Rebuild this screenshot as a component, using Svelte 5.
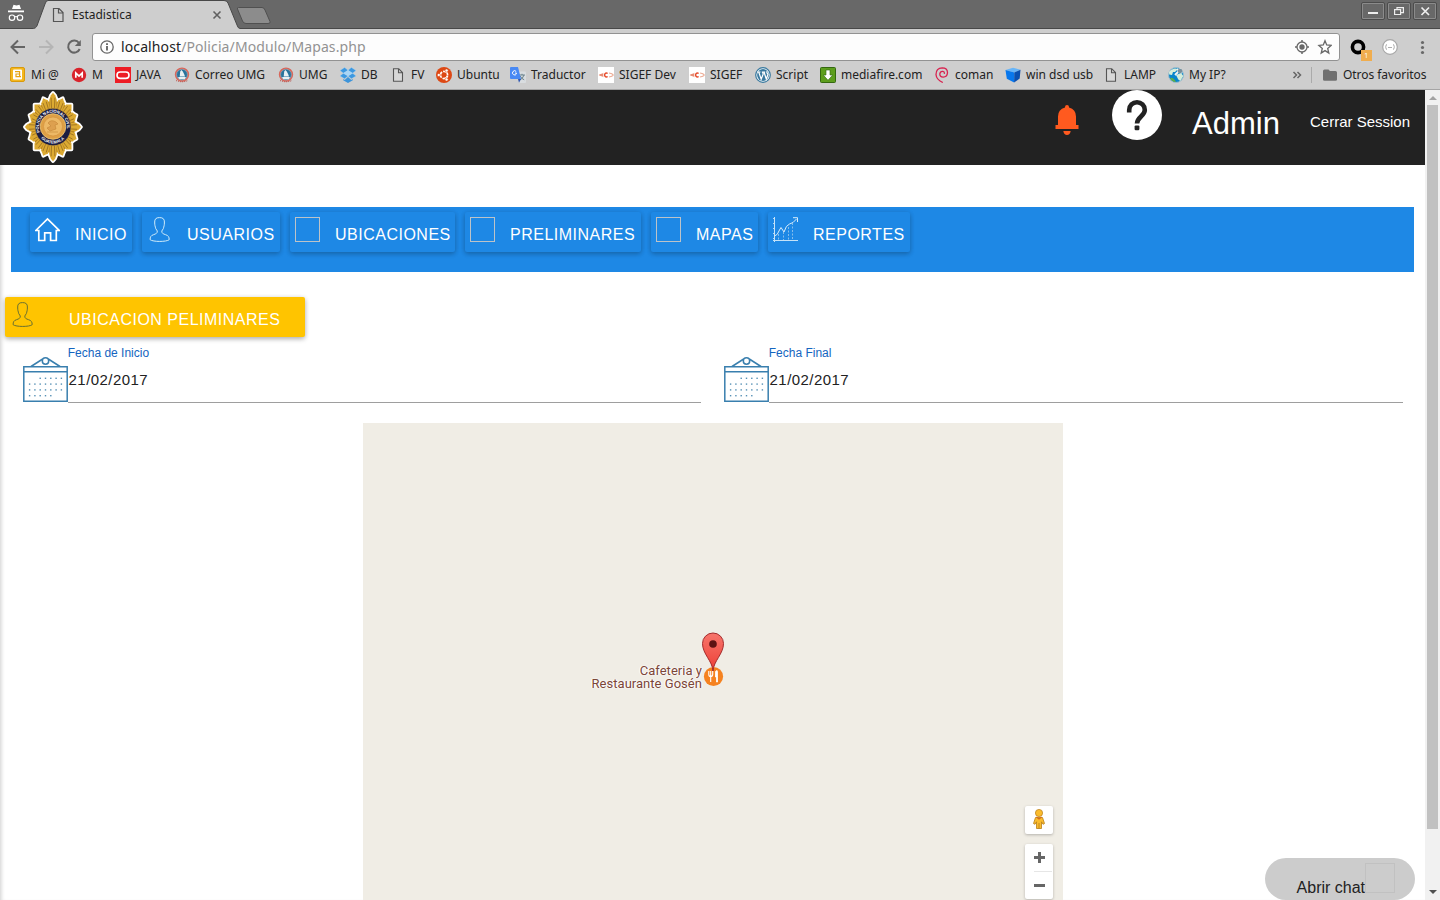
<script>
  const bookmarks = [
    { icon: 'mail', label: 'Mi @', w: 61 },
    { icon: 'mega', label: 'M', w: 44 },
    { icon: 'java', label: 'JAVA', w: 59 },
    { icon: 'umg', label: 'Correo UMG', w: 104 },
    { icon: 'umg', label: 'UMG', w: 62 },
    { icon: 'dropbox', label: 'DB', w: 50 },
    { icon: 'page', label: 'FV', w: 46 },
    { icon: 'ubuntu', label: 'Ubuntu', w: 74 },
    { icon: 'translate', label: 'Traductor', w: 88 },
    { icon: 'sigef', label: 'SIGEF Dev', w: 91 },
    { icon: 'sigef', label: 'SIGEF', w: 66 },
    { icon: 'wordpress', label: 'Script', w: 65 },
    { icon: 'download', label: 'mediafire.com', w: 114 },
    { icon: 'debian', label: 'coman', w: 71 },
    { icon: 'cube', label: 'win dsd usb', w: 98 },
    { icon: 'page', label: 'LAMP', w: 65 },
    { icon: 'globe', label: 'My IP?', w: 80 }
  ];
  const menu = [
    { icon: 'home', label: 'INICIO', w: 102 },
    { icon: 'user', label: 'USUARIOS', w: 138 },
    { icon: 'box', label: 'UBICACIONES', w: 165 },
    { icon: 'box', label: 'PRELIMINARES', w: 176 },
    { icon: 'box', label: 'MAPAS', w: 107 },
    { icon: 'chart', label: 'REPORTES', w: 142 }
  ];
  const dates = [
    { label: 'Fecha de Inicio', value: '21/02/2017' },
    { label: 'Fecha Final', value: '21/02/2017' }
  ];

  // Rays of the police badge, on an ellipse
  const rays = Array.from({ length: 16 }, (_, i) => {
    const a = (i * Math.PI) / 8;
    const k = i % 4 === 0 ? 1.02 : i % 2 === 0 ? 0.95 : 0.93;
    const at = (t, r) => `${(30 + Math.sin(t) * r * 27.5).toFixed(1)},${(36 - Math.cos(t) * r * 33.5).toFixed(1)}`;
    return {
      shape: `${at(a - 0.2, 0.55)} ${at(a - 0.17, 0.82)} ${at(a - 0.08, k * 0.93)} ${at(a, k)} ${at(a + 0.08, k * 0.93)} ${at(a + 0.17, 0.82)} ${at(a + 0.2, 0.55)}`,
      lines: [-0.1, 0.1].map((d) => `M${at(a + d, 0.5)} L${at(a + d * 0.8, k * 0.86)}`).join(' ')
    };
  });
  const dots = [];
  for (let r = 0; r < 4; r++)
    for (let c = 0; c < 7; c++)
      if (!(r === 0 && c < 2) && !(r === 3 && c > 4)) dots.push([6.6 + c * 5.3, 21.3 + r * 5.8]);
</script>

{#snippet favicon(name)}
  <svg class="fav" width="16" height="16" viewBox="0 0 16 16">
    {#if name === 'page'}
      <path d="M3.5 1.7h5.2l3.8 3.8v8.8h-9zM8.5 2v3.8h4" fill="#d8d8d8" stroke="#555" stroke-width="1.1" />
    {:else if name === 'mail'}
      <rect x=".5" y=".5" width="14" height="14" rx="1.5" fill="#f4b71e" stroke="#d99a0b" />
      <rect x="3" y="2.5" width="9" height="10" rx="1" fill="#fff" />
      <path d="M5 4.600h4.600v5M9.500 7H6v2.600h5" fill="none" stroke="#e6a312" stroke-width="1.200" />
    {:else if name === 'mega'}
      <circle cx="8" cy="8" r="7.2" fill="#d9232b" />
      <path d="M4.8 10.800V6L8 9l3.200-3v4.800" fill="none" stroke="#fff" stroke-width="1.700" />
    {:else if name === 'java'}
      <rect width="16" height="16" fill="#ed1c24" />
      <rect x="2" y="5" width="12" height="6.4" rx="3.2" fill="none" stroke="#fff" stroke-width="1.6" />
    {:else if name === 'umg'}
      <circle cx="8" cy="7.6" r="6.4" fill="#28739c" stroke="#d9675b" stroke-width="1.6" />
      <circle cx="8" cy="7.6" r="5.4" fill="none" stroke="#b9c3c8" stroke-width=".5" />
      <path d="M6.200 4.600 7.300 3l1.500 1.600 1.500 3 .7 2H5.700zM4 10h8l-1.200 2.200H5.200z" fill="#e8f0f3" />
      <path d="M2 13.5q6 2.5 12 0" fill="none" stroke="#b5463d" stroke-dasharray="1 1" />
    {:else if name === 'dropbox'}
      <path d="m0 3.5 4.6-3L8 3.3 3.4 6.2zM16 3.5l-4.6-3L8 3.3l4.6 2.9zM0 9l3.4-2.8L8 9l-3.4 2.8zM16 9l-3.4-2.8L8 9l3.4 2.8z" fill="#3d98e0" stroke="#a9d6f6" stroke-width=".4" />
      <path d="m3.2 12 1.5 1L8 10l3.3 3 1.5-1v1.2L8 16l-4.8-2.8z" fill="#3c94da" />
      <path d="M3.4 6.2 8 3.3l4.6 2.9L8 9z" fill="#a8d5f6" />
    {:else if name === 'ubuntu'}
      <circle cx="8" cy="8" r="8" fill="#dd4814" />
      <circle cx="8" cy="8" r="3.6" fill="none" stroke="#fff" stroke-width="1.7" stroke-dasharray="6.5 1.04" stroke-dashoffset="-.5" />
      <g fill="#fff" stroke="#dd4814" stroke-width=".6"><circle cx="2.8" cy="8" r="1.6" /><circle cx="10.6" cy="3.5" r="1.6" /><circle cx="10.6" cy="12.5" r="1.6" /></g>
    {:else if name === 'translate'}
      <path d="M7 4.5h8q1 0 1 1V15q0 1-1 1H9.5z" fill="#d9dde0" />
      <path d="M9.3 8h5.600M12 6.8V8m2 0q-1.200 3.600-4 5m.2-4q1.500 3 4 3.800" fill="none" stroke="#69818a" />
      <path d="M1 0h7l3 12H1q-1 0-1-1V1q0-1 1-1z" fill="#4889f4" />
      <path d="m8 12 3 0-2 3.800z" fill="#2f56b1" />
      <path d="M6.200 4.500A2.100 2.100 0 1 0 6.500 6.800V6.100H5" fill="none" stroke="#fff" stroke-width="1" />
    {:else if name === 'sigef'}
      <rect width="16" height="16" fill="#fff" />
      <path d="m5.500 5.800-5 2.200 5 2.200q-.8-2.200 0-4.400" fill="#f0a690" />
      <path d="M1.500 8h3.500" stroke="#dd6548" stroke-width=".8" />
      <path d="M9.600 6.500A1.900 1.900 0 1 0 9.600 9.500" fill="none" stroke="#e64c2c" stroke-width="1.500" />
      <path d="M11 6q3.500.5 4.300 2-.8 1.500-4.300 2" fill="none" stroke="#edae98" stroke-width="1.200" />
    {:else if name === 'wordpress'}
      <circle cx="8" cy="8" r="7.3" fill="#f5f9fb" stroke="#39799f" stroke-width="1.200" />
      <circle cx="8" cy="8" r="5.9" fill="#39799f" />
      <path d="M2.300 5h3.200M6.800 5h3.400M3.700 5l2.500 7.200L8.200 7 7.500 5M9 5l2.300 7 1.700-4.900q-1.800-1.600-.7-3" fill="none" stroke="#fff" stroke-width="1.200" />
    {:else if name === 'download'}
      <rect x=".5" y=".5" width="15" height="15" rx="1" fill="#5d9e1d" stroke="#346810" />
      <path d="M6 3h4v5h2.700L8 13.300 3.300 8H6z" fill="#fff" stroke="#2f6410" stroke-width=".6" />
    {:else if name === 'debian'}
      <path d="M8.800 15.500Q2.300 12.500 2 7.500 2 1.200 8.200.900q5.200 0 5.300 4.800-.3 4.200-4.300 4.400-3.500-.3-3.400-3.300.4-2.600 3-2.400 2 .5 1.500 2.500" fill="none" stroke="#d8224f" stroke-width="1.300" />
    {:else if name === 'cube'}
      <path d="m.5 3 7.500-2.300 7.500 2L9.300 5.400z" fill="#68b5f8" />
      <path d="m.5 3 8.800 2.400-.2 10.200L1.800 11.800z" fill="#0877ed" />
      <path d="m9.300 5.400 6.200-2.700-.8 8.800-5.600 4.100z" fill="#0a4fb0" />
    {:else if name === 'globe'}
      <circle cx="8" cy="8" r="7.5" fill="#0786cb" stroke="#9ebccb" />
      <path d="M1 5q4-5 9-3L7 5 5 5 4 8 1.200 7.500zM8 8l5-2 2.300 3-3 5-2-1.500z" fill="#d5edda" />
      <path d="M2 11q3-1 6 4-4 0-6-4" fill="#61af45" />
      <path d="m7 8 6-6m-4 0 5 4" stroke="#eef4f5" stroke-width="2" /><circle cx="12" cy="4" r="2.300" fill="#778f9b" />
    {/if}
  </svg>
{/snippet}

{#snippet userIcon(color)}
  <svg width="25" height="25" viewBox="0 0 25 25" fill="none" stroke={color} stroke-width="1">
    <path d="M12.500.6C9 .5 7.600 2.200 7.700 5 7.600 8.500 8.300 9.500 8.700 11.500L10.300 14C10.400 16.300 9 16.800 6.500 17.700 3.800 18.500 3.100 20 3.100 22.700 6 25 19.500 25 22.200 22.700 22.200 20 21.300 18.500 18.600 17.700 16 16.800 14.700 16.300 14.800 14L16.400 11.500C16.800 9.500 17.500 8.500 17.400 5 17.500 2.200 16 .5 12.500.6z" />
  </svg>
{/snippet}

<div class="screen">
  <div class="tabs">
    <svg class="chrome" width="1440" height="29" viewBox="0 0 1440 29">
      <path d="M0 28.500H33.500C36.500 28 37 26 38 23L45 4Q46 .5 48 .5H224Q227 .5 228 3L237 25Q238 28.500 240 28.500H1440V30H0z" fill="#cecece" stroke="#484848" />
      <path d="M238.500 7.500H262Q264 7.500 265 10L270 21.500Q271 23.500 268 23.500H246Q243.500 23.500 242.500 21L237.500 9Q237 7.500 238.500 7.500z" fill="#8c8c8c" stroke="#505050" />
      <path d="m12 9 1.500-4.300 3 .7 3-.7L21 9zM8 10.500h16v1.700H8z" fill="#fff" />
      <g fill="none" stroke="#fff" stroke-width="1.200"><circle cx="12" cy="17.700" r="2.700" /><circle cx="20" cy="17.700" r="2.700" /><path d="M14.500 17q1.500-1 3 0" /></g>
      <path d="M53.500 8.500h5.500l4 4v9h-9.500zM58.500 8.500v4.500H63" fill="none" stroke="#555" stroke-width="1.200" />
      <path d="m213.500 11.500 7 7m0-7-7 7" stroke="#606060" stroke-width="1.600" />
      <g fill="none" stroke="#4c4c4c"><rect x="1361.500" y="2.500" width="23" height="17" rx="1.500" /><rect x="1387.500" y="2.500" width="23" height="17" rx="1.500" /><rect x="1413.500" y="2.500" width="23" height="17" rx="1.500" /></g>
      <g fill="none" stroke="#8b8b8b"><rect x="1362.500" y="3.500" width="21" height="15" rx=".5" /><rect x="1388.500" y="3.500" width="21" height="15" rx=".5" /><rect x="1414.500" y="3.500" width="21" height="15" rx=".5" /></g>
      <path d="M1368 13h10" stroke="#eee" stroke-width="2" />
      <g fill="#686868" stroke="#eee" stroke-width="1.200"><path d="M1397 7.600h6.400v5h-6.400z" /><path d="M1394.600 9.700h6v4.800h-6z" /></g>
      <path d="m1421.500 7.500 7.500 7.500m0-7.500-7.500 7.500" stroke="#eee" stroke-width="1.700" />
    </svg>
    <span class="tabtitle">Estadistica</span>
  </div>

  <div class="toolbar">
    <svg class="navicons" width="92" height="34" viewBox="0 29 92 34" fill="none">
      <path d="M25 47H12M18 40.500 11.500 47l6.500 6.500" stroke="#656565" stroke-width="2" />
      <path d="M39 47h13M46 40.500l6.500 6.500-6.500 6.500" stroke="#b5b5b5" stroke-width="2" />
      <path d="M79 43A6 6 0 1 0 79.700 49" stroke="#656565" stroke-width="2" /><path d="M80.800 40v6h-6z" fill="#656565" />
    </svg>
    <div class="address">
      <svg width="14" height="14" viewBox="0 0 14 14"><circle cx="7" cy="7" r="6.200" fill="none" stroke="#666" stroke-width="1.300" /><path d="M7 6v4.500M7 3.300V5" stroke="#555" stroke-width="1.700" /></svg>
      <span class="url">localhost<i>/Policia/Modulo/Mapas.php</i></span>
      <svg class="right" width="38" height="16" viewBox="0 0 38 16" fill="none" stroke="#686868">
        <circle cx="8" cy="8" r="5" stroke-width="1.300" /><circle cx="8" cy="8" r="2.700" fill="#686868" stroke="none" /><path d="M8 1v2M8 13v2M1 8h2M13 8h2" stroke-width="1.500" />
        <path d="m31 1.700 1.700 4.300 4.400.4-3.400 3.100 1.100 4.600-3.800-2.500-3.800 2.500 1.100-4.600-3.400-3.100 4.400-.4z" stroke-width="1.300" />
      </svg>
    </div>
    <svg width="100" height="34" viewBox="1340 29 100 34">
      <circle cx="1358" cy="47" r="5.600" fill="none" stroke="#000" stroke-width="3.600" />
      <rect x="1361" y="50" width="11" height="11" fill="#f0ad4e" /><text x="1364.300" y="58.200" fill="#fff" font-family="Noto Sans" font-size="7">1</text>
      <circle cx="1390" cy="47" r="7.300" fill="#fff" stroke="#a8a8a8" stroke-width="1.200" />
      <path d="M1387 44.500q-1.300 0-1 1.700l-.7.800.7.800q-.3 1.700 1 1.700M1393 44.500q1.300 0 1 1.700l.7.800-.7.800q.3 1.700-1 1.700M1388 47.500h4" fill="none" stroke="#999" stroke-width=".8" />
      <g fill="#686868"><circle cx="1422.500" cy="42.500" r="1.600" /><circle cx="1422.500" cy="47.500" r="1.600" /><circle cx="1422.500" cy="52.500" r="1.600" /></g>
    </svg>
  </div>

  <div class="bookmarks">
    {#each bookmarks as b}
      <div class="bookmark" style="width:{b.w}px">{@render favicon(b.icon)}<span>{b.label}</span></div>
    {/each}
    <div class="other">
      <svg width="50" height="20" viewBox="1290 65 50 20"><path d="m1293.500 72 3 3-3 3m4-6 3 3-3 3" fill="none" stroke="#666" stroke-width="1.500" /><path d="M1311.500 67v16" stroke="#aaa" /><path d="M1323 71q0-1.500 1.500-1.500h4l1.500 1.500h5.500q1.500 0 1.500 1.500v7q0 1.300-1.500 1.300h-11q-1.500 0-1.500-1.300z" fill="#707070" /></svg>
      <span>Otros favoritos</span>
    </div>
  </div>

  <div class="viewport">
    <main>
      <header>
        <svg class="badge" width="60" height="74" viewBox="0 0 60 72">
          <g fill="#fff" stroke="#fff" stroke-width="3.600" stroke-linejoin="round">{#each rays as r}<polygon points={r.shape} />{/each}</g>
          <ellipse cx="30" cy="36" rx="22" ry="26" fill="#b07d1c" />
          <g fill="#dcaa32">{#each rays as r}<polygon points={r.shape} />{/each}</g>
          <g stroke="#8a601a" stroke-width=".7">{#each rays as r}<path d={r.lines} />{/each}</g>
          <ellipse cx="30" cy="36" rx="18" ry="18.800" fill="#1b1d42" stroke="#c99a35" stroke-width=".7" />
          <circle cx="30" cy="35.500" r="12.800" fill="#dea046" stroke="#f2cc77" stroke-width=".8" />
          <circle cx="30" cy="35.500" r="9.500" fill="#edb966" stroke="#d6943e" stroke-width=".7" />
          <path d="M25 32q3-4 8-1l2 2-3 1 1 4-6 2-3-3 4-2zM24 41h11" fill="#dda04f" stroke="#c48738" stroke-width=".6" />
          <path id="arcTop" d="M17.500 42.500A14 14.400 0 1 1 42.500 42.500" fill="none" /><path id="arcBottom" d="M15.500 43.500A16.400 17 0 0 0 44.500 43.500" fill="none" />
          <g fill="#fff" font-family="Liberation Sans" font-weight="700" font-size="4.200"><text><textPath href="#arcTop" startOffset="1.500" textLength="51" lengthAdjust="spacingAndGlyphs">POLICIA NACIONAL CIVIL</textPath></text><text><textPath href="#arcBottom" startOffset="4.500" textLength="26" lengthAdjust="spacingAndGlyphs">GUATEMALA</textPath></text></g>
        </svg>
        <svg class="bell" width="24" height="30" viewBox="0 0 24 30" fill="#ff5a1f"><path d="M10 2.500V2a2 2 0 0 1 4 0v.5q7 2 7 9V20h2.500v4H.5v-4H3v-8.500q0-7 7-9zM8.300 26h7.400q-.7 4-3.700 4t-3.700-4z" /></svg>
        <svg class="help" width="50" height="50" viewBox="0 0 50 50"><circle cx="25" cy="25" r="25" fill="#fff" /><path d="M17.200 22.500v-2.500a7.800 7.800 0 0 1 15.600 0c0 6-7.800 7-7.800 13.500" fill="none" stroke="#222" stroke-width="4.600" /><rect x="22.600" y="35.400" width="4.800" height="4.800" rx="1.200" fill="#222" /></svg>
        <span class="admin">Admin</span>
        <span class="logout">Cerrar Session</span>
      </header>

      <nav>
        {#each menu as m}
          <div class="btn" style="width:{m.w}px">
            {#if m.icon === 'user'}
              {@render userIcon('#d0ebf9')}
            {:else}
              <svg width="25" height="25" viewBox="0 0 25 25" fill="none">
                {#if m.icon === 'home'}
                  <path d="m.8 13.500 11.700-11.500L24.200 13.500H21.300V23.500h-5.700v-7.700H9.700v7.700H3.800v-10z" stroke="#fff" stroke-width="1.700" />
                {:else if m.icon === 'box'}
                  <rect x=".5" y=".5" width="24" height="24" stroke="#bdc3c8" />
                {:else}
                  <path d="M1.500 0v25M0 23.500h25" stroke="#c5e2f8" /><path d="M.5 1v24" stroke="#afd7f5" stroke-dasharray="1 4" />
                  <path d="M1.500 19q3-.5 5-6l1.500-2.500 3 4.500q2-7 5.500-8 3.500-.5 7-5M20 .700h4.500V5" stroke="#d8ecfa" />
                  <path d="M5.500 17v6m5-8v8m5-13v13m4-17v17" stroke="#85bdea" stroke-dasharray="2 1.500" />
                {/if}
              </svg>
            {/if}
            <span>{m.label}</span>
          </div>
        {/each}
      </nav>

      <div class="title">{@render userIcon('#687032')}<span>UBICACION PELIMINARES</span></div>

      <div class="dates">
        {#each dates as d}
          <div class="date">
            <svg width="45" height="46" viewBox="0 0 45 46" fill="none" stroke="#397fae" stroke-width="1.500">
              <path d="M.8 9.800h43.400v34.500H.8zM1 14.800h43M8 9.500 19.700 2M37 9.500 25.300 2" /><circle cx="22.500" cy="4" r="3.200" />
              {#each dots as [x, y]}<rect x={x - 0.7} y={y - 0.7} width="1.400" height="1.400" fill="#5590b5" stroke="none" />{/each}
            </svg>
            <div class="field"><label>{d.label}</label><span>{d.value}</span></div>
          </div>
        {/each}
      </div>

      <section class="map">
        <div class="place">Cafeteria y<br />Restaurante Gosén</div>
        <svg class="pin" width="24" height="56" viewBox="0 0 24 56">
          <circle cx="12.500" cy="44.500" r="9.600" fill="#f58220" />
          <path d="M7.800 39v3.500q0 2 1.900 2V50M11.700 39v3.500q0 2-2 2M9.700 39v5" fill="none" stroke="#fff" stroke-width="1.100" /><path d="M14.500 45v-5.500q2-2 2 0V50h-1v-5z" fill="#fff" stroke="#fff" stroke-width=".8" />
          <path d="M12 39C11.500 29 1.500 22 1.500 11.500a10.500 10.500 0 0 1 21 0C22.500 22 12.500 29 12 39z" fill="url(#pinred)" stroke="#a52b2b" />
          <circle cx="12" cy="12" r="3.800" fill="#5d1313" />
          <defs><linearGradient id="pinred" x2="0" y2="1"><stop stop-color="#f7756c" /><stop offset="1" stop-color="#ed3f35" /></linearGradient></defs>
        </svg>
        <div class="controls">
          <div class="ctl"><svg width="28" height="28" viewBox="0 0 28 28"><path d="M10.500 11.500h7l2 6-1.500.8-1.500-2.500v6.700h-5v-6.700L10 18.300l-1.500-.8z" fill="#fbbc2c" stroke="#b87d17" stroke-width=".8" /><circle cx="14" cy="7" r="3.600" fill="#fbbc2c" stroke="#b87d17" stroke-width=".7" /><path d="m11.500 11 2.500 2 2.500-2" fill="none" stroke="#d86d19" stroke-width="1.300" /><path d="M14 17v5.500" stroke="#b87d17" stroke-width=".8" /></svg></div>
          <div class="ctl zoom"><svg width="28" height="55" viewBox="0 0 28 55"><path d="M9 13.500h11M14.500 8v11M9 41.500h11" stroke="#666" stroke-width="3" /><path d="M9 27.500h18" stroke="#e6e6e6" /></svg></div>
        </div>
      </section>
      <div class="chat"><span>Abrir chat</span><i></i></div>
    </main>
    <div class="scroll"><b class="up"></b><div class="thumb"></div><b class="down"></b></div>
  </div>
</div>

<style>
  :global(body) { margin: 0; overflow: hidden; }
  .screen { width: 1440px; height: 900px; overflow: hidden; background: #fff; font-family: "Liberation Sans", Arial, sans-serif; display: flex; flex-direction: column; }
  svg { display: block; flex: none; }
  .tabs { height: 29px; flex: none; background: #686868; position: relative; font: 12px/16px "Noto Sans", sans-serif; color: #1e1e1e; }
  .chrome { position: absolute; inset: 0; }
  .tabtitle { position: relative; display: inline-block; margin: 7px 0 0 72px; }
  .toolbar { height: 34px; flex: none; background: #cecece; display: flex; }
  .address { box-sizing: border-box; width: 1248px; height: 28px; margin-top: 4px; border: 1px solid #929292; border-radius: 3px; background: #fdfdfd; display: flex; align-items: center; padding: 0 7px; }
  .url { font: 14px/20px "Noto Sans", sans-serif; color: #222; margin-left: 7px; letter-spacing: .11px; }
  .url i { font-style: normal; color: #929292; }
  .right { margin-left: auto; }
  .bookmarks { box-sizing: border-box; height: 27px; flex: none; background: #cecece; border-bottom: 1px solid #a5a5a5; display: flex; padding: 3px 0 0 10px; font: 12px/17px "Noto Sans", sans-serif; color: #222; white-space: nowrap; }
  .bookmark { display: flex; flex: none; gap: 5px; height: 18px; }
  .fav { margin-top: 1px; }
  .other { display: flex; margin-left: 42px; gap: 3px; letter-spacing: -.05px; }
  .other svg { margin-top: -1px; }
  .viewport { display: flex; flex: 1; min-height: 0; }
  main { width: 1425px; height: 810px; overflow: hidden; position: relative; flex: none; box-shadow: inset 4px 0 4px -3px #ccc; }
  header { height: 75px; background: #222; display: flex; color: #fff; }
  .badge { margin: 0 0 0 23px; }
  .bell { margin: 15px 0 0 972px; }
  .help { margin-left: 33px; }
  .admin { font-size: 31px; line-height: 36px; margin: 16px 0 0 30px; width: 88px; }
  .logout { font-size: 15px; line-height: 18px; margin: 23px 0 0 30px; white-space: nowrap; }
  nav { height: 60px; width: 1384px; margin: 42px 0 0 11px; padding: 5px 0 0 19px; background: #1e88e5; display: flex; gap: 10px; }
  .btn { box-sizing: border-box; height: 40px; padding: 5px; border-radius: 2px; display: flex; gap: 15px; color: #fff; font-size: 16px; line-height: 18px; letter-spacing: .5px; box-shadow: 0 2px 5px rgba(0,0,0,.2), 0 1px 5px rgba(0,0,0,.1); }
  .btn span, .title span { margin-top: 9px; white-space: nowrap; }
  .title { box-sizing: border-box; width: 300px; height: 40px; margin: 25px 0 0 5px; padding: 5px; background: #ffc400; border-radius: 2px; display: flex; gap: 34px; color: #fff; font-size: 16px; line-height: 18px; letter-spacing: .5px; box-shadow: 0 2px 5px rgba(0,0,0,.25), 0 1px 5px rgba(0,0,0,.1); }
  .dates { display: flex; gap: 23px; height: 66px; padding-left: 23px; }
  .date { display: flex; width: 678px; padding-top: 20px; box-sizing: border-box; height: 66px; }
  .date + .date { width: 679px; }
  .field { box-sizing: border-box; flex: 1; height: 58px; margin-top: -12px; border-bottom: 1px solid #9e9e9e; display: flex; flex-direction: column; }
  .field label { font-size: 12px; line-height: 16px; margin-left: -.3px; color: #1565c0; }
  .field span { font-size: 15px; line-height: 18px; margin: 10px 0 0 .6px; color: #222; letter-spacing: .43px; }
  .map { width: 700px; height: 477px; margin: 20px 0 0 363px; background: #f0ede5; position: relative; }
  .place { position: absolute; right: 361px; top: 241px; text-align: right; font: 13px/13px Roboto, sans-serif; letter-spacing: .03px; color: #7c4638; text-shadow: 0 0 2px #fff, 1px 0 1px #fff, -1px 0 1px #fff; white-space: nowrap; }
  .pin { position: absolute; left: 338px; top: 209px; }
  .controls { position: absolute; right: 10px; bottom: 1px; display: flex; flex-direction: column; gap: 10px; }
  .ctl { width: 28px; height: 28px; background: #fff; border-radius: 2px; box-shadow: 0 1px 3px rgba(0,0,0,.25); }
  .ctl.zoom { height: 55px; }
  .chat { position: absolute; left: 1265px; top: 768px; width: 150px; height: 42px; border-radius: 21px; background: #ccc; display: flex; box-sizing: border-box; padding-left: 31.600px; color: #222; font-size: 16px; line-height: 18px; }
  .chat span { width: 68.400px; margin-top: 21px; white-space: nowrap; }
  .chat i { width: 28px; height: 28px; margin-top: 5px; border: 1px solid #c1c1c1; }
  .scroll { width: 15px; background: #f1f1f1; display: flex; flex-direction: column; align-items: center; }
  .up { border: 4px solid transparent; border-top: 0; border-bottom: 4px solid #a3a3a3; margin: 6px 0 5px; }
  .thumb { width: 11px; height: 724px; background: #c1c1c1; }
  .down { border: 4px solid transparent; border-bottom: 0; border-top: 4px solid #505050; margin-top: 61px; }
</style>
